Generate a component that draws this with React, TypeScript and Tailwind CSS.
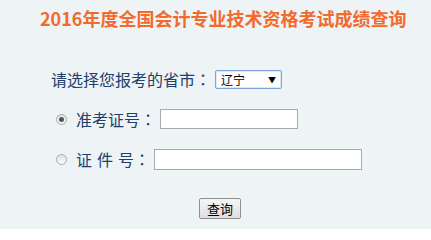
import React from "react";

function Radio({ checked }: { checked?: boolean }) {
  return (
    <span className="flex h-[11px] w-[11px] items-center justify-center rounded-full border border-[#a9a9a9] bg-gradient-to-b from-[#e2e2e2] to-[#fbfbfb]">
      {checked && <span className="h-[5px] w-[5px] rounded-full bg-[#555]" />}
    </span>
  );
}

function Colon() {
  return <span style={{ fontFamily: '"Noto Sans CJK TC", sans-serif' }}>：</span>;
}

export default function App() {
  const cjk = { fontFamily: '"Noto Sans CJK SC", "Noto Sans", sans-serif' };
  return (
    <div className="flex h-[229px] w-full flex-col bg-[#eef3f6] text-[#21406b]" style={cjk}>
      <div className="ml-[40px] mt-[6px] h-[24px] text-[18px] font-bold leading-[24px] text-[#f26a2c]">
        2016年度全国会计专业技术资格考试成绩查询
      </div>

      <div className="ml-[51px] mt-[40px] flex h-[19px] items-center">
        <span className="flex w-[164px] text-[16px] leading-[19px]">
          请选择您报考的省市<Colon />
        </span>
        <div className="flex h-[19px] w-[67px] items-center justify-between rounded-[2px] border border-[#7ea4d9] bg-white pl-[5px] pr-[5px] text-[12px] text-black shadow-[inset_0_0_0_1px_#dce8f6]">
          <span className="leading-[17px]">辽宁</span>
          <span className="text-[8px] leading-none">▼</span>
        </div>
      </div>

      <div className="ml-[56px] mt-[20px] flex h-[20px] items-center">
        <Radio checked />
        <span className="ml-[9px] flex w-[84px] text-[16px] leading-[20px]">
          准考证号<Colon />
        </span>
        <div className="h-[20px] w-[138px] border border-[#a9a9a9] bg-white" />
      </div>

      <div className="ml-[56px] mt-[20px] flex h-[21px] items-center">
        <Radio />
        <span className="ml-[9px] flex w-[78px] text-[16px] leading-[21px]">
          <span>证</span>
          <span className="ml-[5px]">件</span>
          <span className="ml-[5px]">号</span>
          <Colon />
        </span>
        <div className="h-[21px] w-[208px] border border-[#a9a9a9] bg-white" />
      </div>

      <div className="ml-[199px] mt-[28px] flex">
        <button className="flex h-[21px] w-[42px] items-center justify-center rounded-[2px] border border-[#8f8f8f] bg-gradient-to-b from-[#f6f6f6] to-[#dedede] text-[13px] leading-none text-black">
          查询
        </button>
      </div>
    </div>
  );
}
